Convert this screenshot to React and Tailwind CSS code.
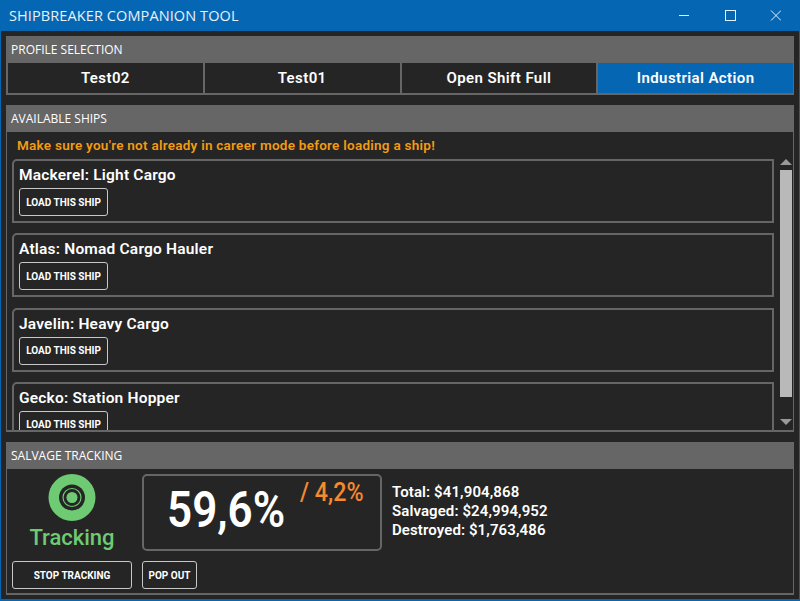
const din = "font-['Roboto','Liberation_Sans',sans-serif]"
const segoe = "font-['Open_Sans','Noto_Sans',sans-serif]"

const profiles = ["Test02", "Test01", "Open Shift Full", "Industrial Action"]
const ships = [
  "Mackerel: Light Cargo",
  "Atlas: Nomad Cargo Hauler",
  "Javelin: Heavy Cargo",
  "Gecko: Station Hopper",
]

function SectionHeader({ children }) {
  return (
    <div className={`flex h-[27px] shrink-0 items-center bg-[#666666] pl-[5px] text-[12px] text-white ${segoe}`}>
      {children}
    </div>
  )
}

function OutlineButton({ children, className }) {
  return (
    <button className={`flex h-[28px] shrink-0 items-center justify-center rounded-[3px] border border-[#c8c8c8] bg-[#252525] text-[10px] font-bold text-white ${din} ${className}`}>
      {children}
    </button>
  )
}

function ShipCard({ name }) {
  return (
    <div className="h-[64px] shrink-0 rounded-tl-[5px] border-2 border-[#666666] pl-[5px] pt-[4px]">
      <div className={`h-[20px] text-[15.5px] leading-[20px] font-semibold tracking-[0.2px] text-white ${din}`}>{name}</div>
      <OutlineButton className="mt-[3px] w-[89px]">LOAD THIS SHIP</OutlineButton>
    </div>
  )
}

export default function App() {
  return (
    <div className="flex h-[601px] w-[800px] flex-col overflow-hidden border-x border-b-2 border-[#0566b3] bg-[#252525]">
      {/* Title bar */}
      <div className="-mx-px flex h-[31px] shrink-0 items-center justify-between bg-[#0566b3] pl-[9px] text-white">
        <span className={`text-[14.5px] tracking-[0.1px] text-[#e8f1f8] ${segoe}`}>SHIPBREAKER COMPANION TOOL</span>
        <svg width="102" height="11" viewBox="0 0 102 11" fill="none" stroke="#e8f1f8" strokeWidth="1" className="mr-[19px]">
          <path d="M0 5.5H10" />
          <rect x="46.5" y="0.5" width="10" height="10" />
          <path d="M92 0.5 102 10.5M102 0.5 92 10.5" />
        </svg>
      </div>

      <div className="flex flex-1 flex-col px-[5px] pt-[5px]">
        {/* Profile selection */}
        <section className="flex h-[59px] shrink-0 flex-col border-b-2 border-[#666666]">
          <SectionHeader>PROFILE SELECTION</SectionHeader>
          <div className="flex flex-1 border-x border-l-2 border-[#666666]">
            {profiles.map((p, i) => (
              <div
                key={p}
                className={`flex flex-1 items-center justify-center text-[15px] font-semibold tracking-[0.4px] text-white ${din} ${i === 3 ? "bg-[#0566b3]" : "border-r-2 border-[#666666]"}`}
              >
                {p}
              </div>
            ))}
          </div>
        </section>

        {/* Available ships */}
        <section className="mt-[10px] flex h-[327px] shrink-0 flex-col border-x border-b-2 border-[#666666]">
          <div className="-mx-px">
            <SectionHeader>AVAILABLE SHIPS</SectionHeader>
          </div>
          <div className={`h-[27px] shrink-0 pl-[10px] pt-[5px] text-[13.5px] leading-[17px] font-semibold tracking-[0.26px] text-[#f39c12] ${din}`}>
            Make sure you're not already in career mode before loading a ship!
          </div>
          <div className="flex min-h-0 flex-1">
            <div className="flex min-w-0 flex-1 flex-col gap-[10.3px] overflow-hidden pl-[5px]">
              {ships.map((s) => (
                <ShipCard key={s} name={s} />
              ))}
            </div>
            <div className="flex w-[19px] shrink-0 flex-col items-center pl-[5px] pr-[1px]">
              <svg width="12" height="6" viewBox="0 0 12 6" className="shrink-0">
                <path d="M6 0 12 6H0Z" fill="#999999" />
              </svg>
              <div className="mt-[5px] h-[227px] w-[12px] shrink-0 bg-[#b9b9b9]" />
              <div className="flex-1" />
              <svg width="12" height="6" viewBox="0 0 12 6" className="mb-[5px] shrink-0">
                <path d="M0 0H12L6 6Z" fill="#999999" />
              </svg>
            </div>
          </div>
        </section>

        {/* Salvage tracking */}
        <section className="mt-[10px] flex h-[153px] shrink-0 flex-col border-x border-b-2 border-[#666666]">
          <div className="-mx-px">
            <SectionHeader>SALVAGE TRACKING</SectionHeader>
          </div>
          <div className="flex flex-1 flex-col pl-[5px] pt-[5px]">
            <div className="flex h-[77px] shrink-0">
              <div className="flex w-[120px] shrink-0 flex-col items-center">
                <svg width="48" height="47" viewBox="0 0 48 47" className="shrink-0">
                  <circle cx="24" cy="23.5" r="23.5" fill="#6fcb73" />
                  <circle cx="24" cy="23.5" r="13" fill="#252525" />
                  <circle cx="24" cy="23.5" r="9" fill="none" stroke="#6fcb73" strokeWidth="1.2" />
                  <circle cx="24" cy="23.5" r="5.5" fill="#6fcb73" />
                </svg>
                <div className={`mt-[3px] text-[22px] leading-[27px] font-medium text-[#6fcb73] ${din}`}>Tracking</div>
              </div>
              <div className="relative ml-[10px] w-[240px] shrink-0 rounded-[5px] border-2 border-[#666666]">
                <span className={`absolute left-[23px] top-[4px] origin-left scale-x-[0.88] text-[50px] leading-[60px] font-semibold text-white ${din}`}>59,6%</span>
                <span className={`absolute left-[156px] top-[2px] origin-left scale-x-[0.93] text-[25px] leading-[30px] font-medium text-[#f58a2e] ${din}`}>/ 4,2%</span>
              </div>
              <div className={`ml-[10px] pt-[9px] text-[15px] leading-[19px] font-semibold tracking-[0.1px] text-white ${din}`}>
                <div>Total: $41,904,868</div>
                <div>Salvaged: $24,994,952</div>
                <div>Destroyed: $1,763,486</div>
              </div>
            </div>
            <div className="mt-[10px] flex gap-[10px]">
              <OutlineButton className="w-[120px]">STOP TRACKING</OutlineButton>
              <OutlineButton className="w-[55px]">POP OUT</OutlineButton>
            </div>
          </div>
        </section>
      </div>
    </div>
  )
}
